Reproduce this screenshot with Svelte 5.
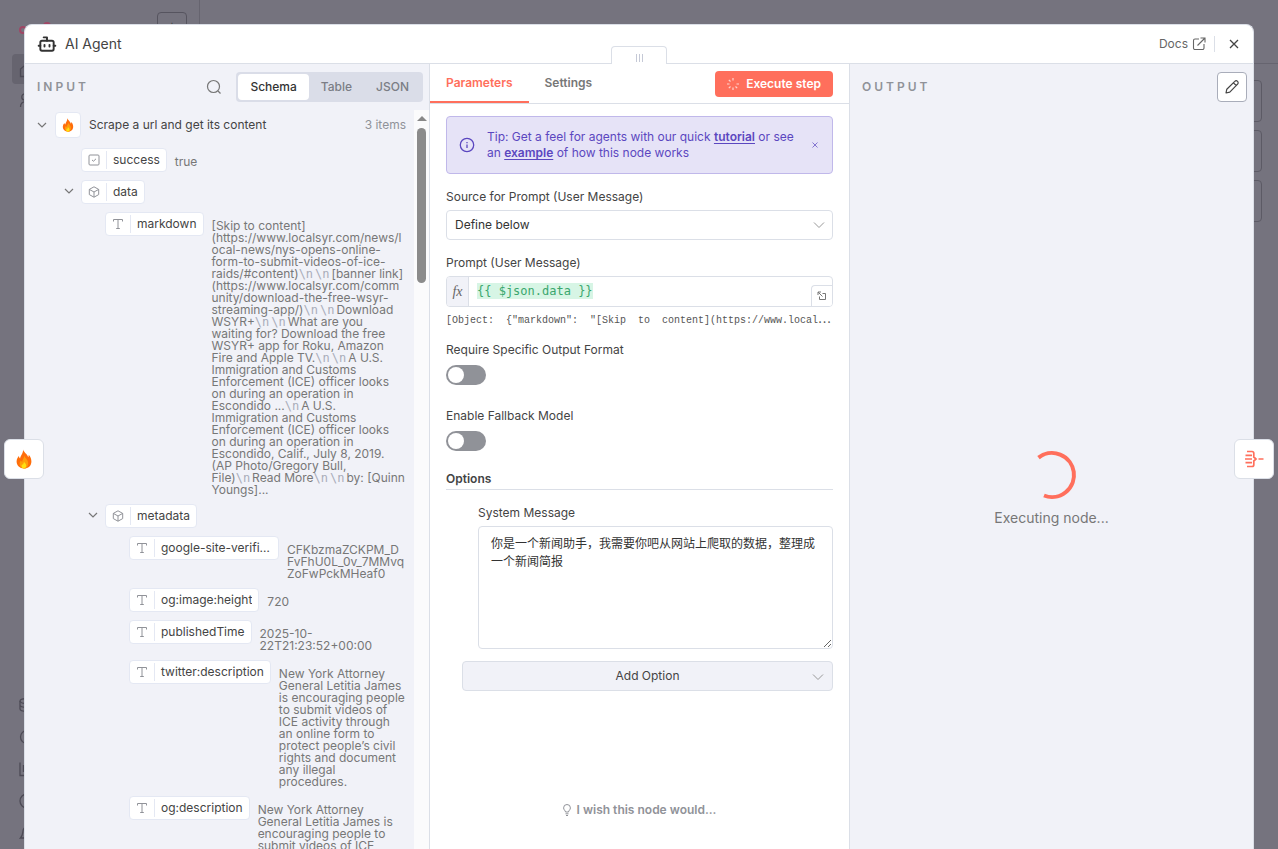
<script>
  const markdown = [
    '[Skip to content](https://www.localsyr.com/news/local-news/nys-opens-online-form-to-submit-videos-of-ice-raids/#content)',
    '\n', '\n', '[banner link](https://www.localsyr.com/community/download-the-free-wsyr-streaming-app/)',
    '\n', '\n', 'Download WSYR+', '\n', '\n',
    'What are you waiting for? Download the free WSYR+ app for Roku, Amazon Fire and Apple TV.',
    '\n', '\n', 'A U.S. Immigration and Customs Enforcement (ICE) officer looks on during an operation in Escondido ...',
    '\n', 'A U.S. Immigration and Customs Enforcement (ICE) officer looks on during an operation in Escondido, Calif., July 8, 2019. (AP Photo/Gregory Bull, File)',
    '\n', 'Read More', '\n', '\n', 'by: [Quinn Youngs]...'
  ];

  const rows = [
    { level: 0, type: 'bool', name: 'success', value: ['true'] },
    { level: 0, type: 'object', name: 'data' },
    { level: 1, type: 'string', name: 'markdown', value: markdown },
    { level: 1, type: 'object', name: 'metadata' },
    { level: 2, type: 'string', name: 'google-site-verification', value: ['CFKbzmaZCKPM_DFvFhU0L_0v_7MMvqZoFwPckMHeaf0'] },
    { level: 2, type: 'string', name: 'og:image:height', value: ['720'] },
    { level: 2, type: 'string', name: 'publishedTime', value: ['2025-10-22T21:23:52+00:00'] },
    { level: 2, type: 'string', name: 'twitter:description', value: ['New York Attorney General Letitia James is encouraging people to submit videos of ICE activity through an online form to protect people’s civil rights and document any illegal procedures.'] },
    { level: 2, type: 'string', name: 'og:description', value: ['New York Attorney General Letitia James is encouraging people to submit videos of ICE'] }
  ];

  const preview = '[Object:\u00a0 {"markdown":\u00a0 "[Skip\u00a0 to\u00a0 content](https://www.local';
  let source = $state('Define below');
  let systemMessage = $state('你是一个新闻助手，我需要你吧从网站上爬取的数据，整理成一个新闻简报');
</script>

{#snippet chevron()}
  <svg width="12" height="12" viewBox="0 0 12 12" fill="none" stroke="currentColor" stroke-width="1.2"><path d="M2 4l4 4 4-4" /></svg>
{/snippet}

{#snippet caret()}
  <svg width="12" height="12" viewBox="0 0 12 12" fill="none" stroke="currentColor"><path d="M1 3.500l5 5 5-5" /></svg>
{/snippet}

{#snippet flame(size)}
  <svg width={size} height={size} viewBox="0 0 20 20">
    <path d="M9 0.5C9.6 3 13.4 5.2 14.2 8.2c.5-.8.6-1.6.5-2.4C16.6 7.800 17.400 10.200 17.400 12.400 17.400 16.700 14.200 19.500 10 19.500S2.600 16.700 2.600 12.600C2.600 10 3.900 8.300 4.900 7c.1 1.100.5 1.900 1.200 2.400C6.600 6 9.400 4.500 9 .5z" fill="#ff6d0a" />
    <path d="M10.300 6.500c.3 2.300 3.900 4 3.900 7.700 0 3-1.900 5.300-4.200 5.300s-4.400-1.900-4.400-4.700c0-1.600.7-2.600 1.400-3.500.2.900.6 1.300 1.100 1.600.2-2.500 2.300-3.600 2.200-6.400z" fill="#ff9d0b" />
    <path d="M10 12.500c.3 1.300 2.200 2.100 2.200 4.100 0 1.700-1 2.900-2.300 2.900s-2.300-1-2.300-2.500c0-1 .4-1.500.8-2 .1.500.3.800.6.900.1-1.200 1-2 1-3.400z" fill="#ffdf12" />
  </svg>
{/snippet}

<div class="page">
  <div class="backdrop" aria-hidden="true">
    <div class="side">
      <div class="brand">
        <svg width="34" height="14" viewBox="0 0 34 14" fill="none" stroke="#a04765" stroke-width="2"><circle cx="4" cy="8" r="3" /><circle cx="28" cy="4" r="3" /><path d="M7 8h8l5-4h5" /></svg>
        <div class="plus">+</div>
      </div>
      <div class="nav on"><svg width="16" height="16" viewBox="0 0 16 16"><path d="M1.500 7L8 1.500 14.500 7v7.500h-13z" /></svg></div>
      <div class="nav"><svg width="16" height="16" viewBox="0 0 16 16"><circle cx="6" cy="5" r="3.200" /><path d="M1.500 15c0-7 9-7 9 0" /></svg></div>
      <div class="lower">
        <div class="nav"><svg width="16" height="16" viewBox="0 0 16 16"><ellipse cx="8" cy="4" rx="7" ry="2.500" /><path d="M1 4v8c0 3.200 14 3.200 14 0V4M1 8c0 3.200 14 3.200 14 0" /></svg></div>
        <div class="nav"><svg width="16" height="16" viewBox="0 0 16 16"><circle cx="8" cy="8" r="6.500" /></svg></div>
        <div class="nav"><svg width="16" height="16" viewBox="0 0 16 16"><path d="M1 1.500v13h14M4.500 4v7" /></svg></div>
        <div class="nav"><svg width="16" height="16" viewBox="0 0 16 16"><circle cx="8" cy="8" r="7" /></svg></div>
        <div class="nav"><svg width="16" height="16" viewBox="0 0 16 16"><path d="M1.500 13c2-2 2-4 2.500-7a4 4 0 018 0c.5 3 .5 5 2.500 7z" /></svg></div>
      </div>
    </div>
    <div class="canvas">
      <div class="strip"></div>
      <div class="cards"><div></div><div></div><div></div></div>
    </div>
  </div>

  <main class="modal">
    <header class="top">
      <svg width="20" height="20" viewBox="0 0 24 24" fill="none" stroke="#333" stroke-width="2.300" stroke-linecap="round" stroke-linejoin="round"><path d="M12 8V4H8" /><rect width="16" height="12" x="4" y="8" rx="2" /><path d="M2 14h2M20 14h2M15 13v2M9 13v2" /></svg>
      <h1>AI Agent</h1>
      <a class="docs" href="#docs">Docs
        <svg width="14" height="14" viewBox="0 0 14 14" fill="none" stroke="currentColor" stroke-width="1.100"><path d="M7 2H3a1.500 1.500 0 00-1.500 1.500v7.500A1.500 1.500 0 003 12.500h7.500A1.500 1.500 0 0012 11V7M8.500 1H13v4.500M13 1L5.500 8.500" /></svg>
      </a>
      <button class="close" aria-label="Close"><svg width="10" height="10" viewBox="0 0 10 10" fill="none" stroke="currentColor" stroke-width="1.300"><path d="M1 1l8 8M9 1L1 9" /></svg></button>
    </header>

    <div class="cols">
      <section class="input">
        <div class="head">
          <h2>Input</h2>
          <button class="search" aria-label="Search"><svg width="16" height="16" viewBox="0 0 16 16" fill="none" stroke="currentColor" stroke-width="1.200"><circle cx="7.500" cy="7.500" r="6" /><path d="M12 12l2.500 2.500" /></svg></button>
          <div class="seg"><button class="on">Schema</button><button>Table</button><button>JSON</button></div>
        </div>
        <div class="scroll">
          <div class="tree">
            <div class="source">
              <span class="arrow">{@render chevron()}</span>
              <span class="tile">{@render flame(14)}</span>
              <span>Scrape a url and get its content</span>
              <span class="count">3 items</span>
            </div>
            {#each rows as row}
              <div class="row l{row.level}">
                <span class="arrow">{#if row.type === 'object'}{@render chevron()}{/if}</span>
                <span class="pill">
                  <span class="kind">
                    {#if row.type === 'bool'}
                      <svg width="12" height="12" viewBox="0 0 12 12"><rect x="1" y="1" width="10" height="10" rx="1" /><path d="M4 6l1.500 1.200L8 4.800" /></svg>
                    {:else if row.type === 'object'}
                      <svg width="12" height="12" viewBox="0 0 12 12"><path d="M6 .8l4.700 2.600v5.200L6 11.200 1.300 8.600V3.400zM1.300 3.400L6 6l4.700-2.600M6 6v5.200" /></svg>
                    {:else}
                      <svg width="12" height="12" viewBox="0 0 12 12"><path d="M1.500 3.500V1.500h9v2M6 1.500v9M4.200 10.500h3.600" /></svg>
                    {/if}
                  </span>
                  <span class="name">{row.name}</span>
                </span>
                {#if row.value}
                  <span class="value">{#each row.value as part}{#if part === '\n'}<span class="nl">\n</span>{:else}{part}{/if}{/each}</span>
                {/if}
              </div>
            {/each}
          </div>
          <div class="bar"><i></i><b></b></div>
        </div>
      </section>

      <section class="params">
        <div class="grip"><i></i><i></i><i></i></div>
        <nav class="tabs">
          <button class="tab on">Parameters</button>
          <button class="tab">Settings</button>
          <button class="run"><svg width="12" height="12" viewBox="0 0 12 12" stroke="#fff" stroke-width="1.200"><path d="M6 0v2.500M6 9.500V12M0 6h2.500M9.500 6H12M1.800 1.800l1.700 1.700M8.500 8.500l1.700 1.700M1.800 10.200l1.700-1.700" opacity=".7" /></svg>Execute step</button>
        </nav>
        <div class="form">
          <div class="tip">
            <svg width="16" height="16" viewBox="0 0 16 16" fill="none" stroke="currentColor" stroke-width="1.300"><circle cx="8" cy="8" r="6.700" /><path d="M8 7.500v3.500M8 5v1.200" /></svg>
            <p>Tip: Get a feel for agents with our quick <a href="#tutorial">tutorial</a> or see an <a href="#example">example</a> of how this node works</p>
            <button aria-label="Dismiss"><svg width="6" height="6" viewBox="0 0 6 6" fill="none" stroke="currentColor"><path d="M.5.5l5 5M5.500.5l-5 5" /></svg></button>
          </div>

          <label for="source">Source for Prompt (User Message)</label>
          <div class="select">
            <select id="source" bind:value={source}><option>Define below</option></select>
            {@render caret()}
          </div>

          <label for="prompt">Prompt (User Message)</label>
          <div class="expr">
            <span class="fx">fx</span>
            <div id="prompt" class="code" role="textbox" aria-label="Prompt (User Message)" tabindex="0"><code>{'{{ $json.data }}'}</code></div>
            <button class="open" aria-label="Open editor"><svg width="10" height="10" viewBox="0 0 10 10" fill="none" stroke="currentColor"><path d="M1 4V1h3M1 1l4.500 4.500M5.500 2.500h3v6h-6v-3" /></svg></button>
          </div>
          <div class="preview">{preview}<span>⋯</span></div>

          <label for="format">Require Specific Output Format</label>
          <input id="format" class="switch" type="checkbox" role="switch" />
          <label for="fallback">Enable Fallback Model</label>
          <input id="fallback" class="switch" type="checkbox" role="switch" />

          <h3>Options</h3>
          <div class="option">
            <label for="system">System Message</label>
            <textarea id="system" bind:value={systemMessage}></textarea>
          </div>
          <button class="add"><span>Add Option</span>{@render caret()}</button>
        </div>
        <a class="wish" href="#feedback"><svg width="8" height="12" viewBox="0 0 8 12" fill="none" stroke="currentColor"><path d="M2.500 8C2.500 6.500 .6 6 .6 3.900a3.400 3.400 0 016.800 0C7.400 6 5.500 6.500 5.500 8zM2.500 9.800h3M3 11.500h2" /></svg>I wish this node would...</a>
      </section>

      <section class="output">
        <div class="head">
          <h2>Output</h2>
          <button class="edit" aria-label="Edit output"><svg width="14" height="14" viewBox="0 0 14 14" fill="none" stroke="currentColor" stroke-width="1.200" stroke-linejoin="round"><path d="M1 13l.8-3.800L9.800 1.400a1.900 1.900 0 012.800 2.700L4.800 12.200zM8.500 2.800l2.700 2.700" /></svg></button>
        </div>
        <div class="busy">
          <svg width="50" height="50" viewBox="0 0 50 50" fill="none" stroke="#ff6f5c" stroke-width="4"><path d="M11.500 7.600A22 22 0 1 1 17 45.500" /></svg>
          <p>Executing node...</p>
        </div>
      </section>
    </div>
  </main>

  <button class="float left" aria-label="Previous node">{@render flame(20)}</button>
  <button class="float right" aria-label="Next node"><svg width="20" height="20" viewBox="0 0 20 20" fill="none" stroke="#ff6f5c" stroke-width="1.700"><path d="M3 2.500h5q1.800 0 1.800 1.800V8L12 10l-2.200 2V15.700q0 1.800-1.800 1.800H3M1.500 6.300H8M1 10h7M1.500 13.700H8M14.500 10h5" /></svg></button>
</div>

<style>
  :global(body) { margin: 0; }
  .page, .page * { box-sizing: border-box; }
  .page { position: relative; height: 100vh; overflow: hidden; padding: 24px 24px 0; background: #75737e; font: 12px/16px Inter, "Noto Sans CJK SC", sans-serif; color: #444; }
  button { font: inherit; color: inherit; border: 0; background: none; padding: 0; margin: 0; display: flex; align-items: center; justify-content: center; }
  h1, h2, h3, p { margin: 0; font: inherit; }
  svg { flex: none; display: block; }

  .backdrop { position: absolute; inset: 0; display: flex; }
  .side { width: 200px; border-right: 1px solid #66646f; padding: 12px 12px 0; display: flex; flex-direction: column; }
  .brand { height: 42px; display: flex; align-items: flex-start; justify-content: space-between; padding-left: 7px; }
  .brand svg { margin-top: 10px; }
  .plus { width: 30px; height: 30px; border: 1px solid #56545f; border-radius: 4px; text-align: center; line-height: 24px; }
  .nav { height: 32px; padding: 8px 7px; border-radius: 4px; }
  .nav.on { height: 30px; background: #66646f; }
  .nav svg { fill: none; stroke: #4c4a55; stroke-width: 1.3; }
  .lower { margin-top: auto; }
  .canvas { flex: 1; }
  .strip { height: 64px; border-bottom: 1px solid #66646f; }
  .cards { padding: 16px 16px 0 0; display: grid; gap: 8px; }
  .cards div { height: 42px; border: 1px solid #5c5a65; border-radius: 4px; }

  .modal { position: relative; height: 100%; display: flex; flex-direction: column; background: #fff; border: 1px solid #dbdfe7; border-bottom: 0; border-radius: 8px 8px 0 0; overflow: hidden; }
  .top { height: 39px; flex: none; display: flex; align-items: center; padding: 0 0 0 12px; border-bottom: 1px solid #dbdfe7; }
  h1 { font-size: 14px; margin-left: 8px; }
  .docs { margin-left: auto; display: flex; align-items: center; gap: 4px; color: #666; text-decoration: none; }
  .close { width: 39px; height: 16px; margin-left: 8px; border-left: 1px solid #dbdfe7; }

  .cols { flex: 1; min-height: 0; display: grid; grid-template-columns: minmax(0, 1fr) 420px minmax(0, 1fr); }
  .cols > section { min-width: 0; min-height: 0; }
  .head { display: flex; align-items: center; height: 46px; padding: 0 6px 0 12px; flex: none; }
  h2 { text-transform: uppercase; letter-spacing: 3px; font-weight: 600; color: #909298; }
  .input, .output { background: #f1f2f8; display: flex; flex-direction: column; }
  .search { margin-left: auto; margin-right: 14px; color: #777; }
  .seg { display: flex; background: #dadde8; padding: 2px; border-radius: 4px; height: 30px; font-weight: 500; color: #7b7d85; }
  .seg button { padding: 0 12px; border-radius: 4px; }
  .seg .on { background: #fff; color: #333; }
  .scroll { flex: 1; min-height: 0; display: flex; overflow: hidden; }
  .tree { flex: 1; min-width: 0; padding: 0 8px 0 12px; overflow: hidden; }
  .bar { width: 15px; background: #fbfbfc; display: flex; flex-direction: column; align-items: center; padding-top: 6px; }
  .bar i { border: 5px solid transparent; border-top: 0; border-bottom-color: #888; }
  .bar b { width: 9px; height: 155px; border-radius: 5px; background: #8b8b8b; margin-top: 7px; }
  .source { display: flex; align-items: center; height: 30px; margin-bottom: 8px; }
  .arrow { width: 12px; flex: none; color: #777; }
  .arrow :global(svg) { margin-left: -1px; }
  .tile { width: 26px; height: 26px; background: #fff; border: 1px solid #e4e8f3; border-radius: 4px; margin: 0 8px 0 6px; display: grid; place-items: center; }
  .count { margin-left: auto; color: #909298; }
  .row { display: flex; align-items: flex-start; margin-bottom: 8px; }
  .row.l0 { padding-left: 27px; }
  .row.l1 { padding-left: 51px; }
  .row.l2 { padding-left: 75px; }
  .row .arrow { padding-top: 5px; margin-right: 5px; }
  .pill { display: flex; align-items: center; height: 24px; background: #fff; border: 1px solid #e4e8f3; border-radius: 4px; flex: none; max-width: 150px; padding-right: 6px; }
  .kind { width: 25px; height: 18px; border-right: 1px solid #e4e8f3; display: grid; place-items: center; flex: none; }
  .kind svg { fill: none; stroke: #909298; }
  .name { padding-left: 6px; overflow: hidden; text-overflow: ellipsis; white-space: nowrap; }
  .value { padding: 8px 0 0 8px; line-height: 12px; color: #777; overflow-wrap: anywhere; flex: 1; min-width: 0; }
  .nl { font-family: "DejaVu Sans Mono", monospace; line-height: 0; color: #a9adba; padding-right: 2px; }

  .params { position: relative; display: flex; flex-direction: column; border-left: 1px solid #dbdfe7; background: #fff; }
  .grip { position: absolute; z-index: 2; top: -18px; left: 181px; width: 56px; height: 18px; border: 1px solid #dbdfe7; border-bottom: 0; border-radius: 4px 4px 0 0; background: #fff; display: flex; justify-content: center; align-items: center; gap: 2px; padding-top: 4px; }
  .grip i { width: 1px; height: 8px; background: #c5c9d6; }
  .tabs { display: flex; height: 40px; flex: none; border-bottom: 1px solid #dbdfe7; padding-right: 16px; align-items: center; font-weight: 600; color: #777; }
  .tab { height: 39px; padding: 0 16px; border-bottom: 2px solid transparent; }
  .tab.on { color: #ff6f5c; border-color: #ff6f5c; }
  .run { margin-left: auto; height: 26px; border-radius: 4px; padding: 0 12px; gap: 7px; background: #ff6f5c; color: #fff; }
  .form { flex: 1; padding: 12px 16px 0; display: flex; flex-direction: column; }
  .tip { display: flex; align-items: center; height: 58px; background: #e6e3f7; border: 1px solid #c0b8ea; border-radius: 4px; color: #5b47c0; padding: 0 14px 0 12px; margin-bottom: 14px; }
  .tip p { flex: 1; margin: 0 12px; }
  .tip a { color: inherit; font-weight: 600; text-underline-offset: 2px; }
  .tip button { opacity: .7; }
  label { height: 22px; padding-top: 1px; }
  .select { position: relative; margin-bottom: 14px; }
  .select select { appearance: none; width: 100%; height: 30px; border: 1px solid #dbdfe7; border-radius: 4px; padding: 0 8px; background: #fff; font: inherit; color: #333; display: block; }
  .select :global(svg), .add :global(svg) { position: absolute; right: 8px; top: 9px; color: #999; pointer-events: none; }
  .expr { position: relative; display: flex; height: 31px; border: 1px solid #dbdfe7; border-radius: 4px; overflow: hidden; }
  .fx { width: 22px; background: #f1f2f8; border-right: 1px solid #dbdfe7; display: grid; place-items: center; font: italic 14px "Liberation Serif", serif; color: #666; }
  .code { padding: 6px 8px; }
  code { font: 12px/16px "DejaVu Sans Mono", monospace; background: #d7f5e5; color: #3aa76d; display: block; }
  .open { position: absolute; right: 0; bottom: 0; width: 21px; height: 21px; border: 1px solid #dbdfe7; border-width: 1px 0 0 1px; border-radius: 4px 0 0; background: #fff; color: #777; }
  .preview { font: 10px/16px "Liberation Mono", monospace; color: #555; white-space: nowrap; overflow: hidden; margin: 3px 0 15px; height: 16px; }
  .preview span { font: 12px/16px "Noto Sans CJK SC", sans-serif; }
  .switch { appearance: none; width: 40px; height: 20px; margin: 2px 0 20px; border-radius: 10px; background: #909298; padding: 2px; display: flex; }
  .switch::before { content: ""; width: 16px; height: 16px; border-radius: 50%; background: #fff; }
  .switch + label { margin-top: 2px; }
  h3 { font-weight: 600; height: 19px; border-bottom: 1px solid #dbdfe7; margin-bottom: 14px; }
  .option { padding-left: 32px; display: flex; flex-direction: column; }
  textarea { height: 123px; border: 1px solid #dbdfe7; border-radius: 4px; padding: 8px 12px; font: 12px/18px Inter, "Noto Sans CJK SC", sans-serif; color: #333; resize: vertical; display: block; background: #fff; }
  .add { position: relative; height: 30px; margin: 12px 0 0 16px; background: #f1f2f8; border: 1px solid #dbdfe7; border-radius: 4px; flex: none; }
  .wish { display: flex; justify-content: center; align-items: center; gap: 6px; color: #909298; font-weight: 600; text-decoration: none; margin-bottom: 31px; }

  .output { border-left: 1px solid #dbdfe7; }
  .edit { margin-left: auto; width: 30px; height: 30px; background: #fff; border: 1px solid #a9adba; border-radius: 4px; }
  .busy { flex: 1; display: flex; flex-direction: column; align-items: center; justify-content: center; gap: 10px; color: #777; font-size: 14px; padding-top: 16px; }
  .float { position: absolute; top: 439px; width: 40px; height: 40px; border: 1px solid #dbdfe7; border-radius: 6px; background: #fff; }
  .left { left: 4px; }
  .right { right: 4px; }
</style>
